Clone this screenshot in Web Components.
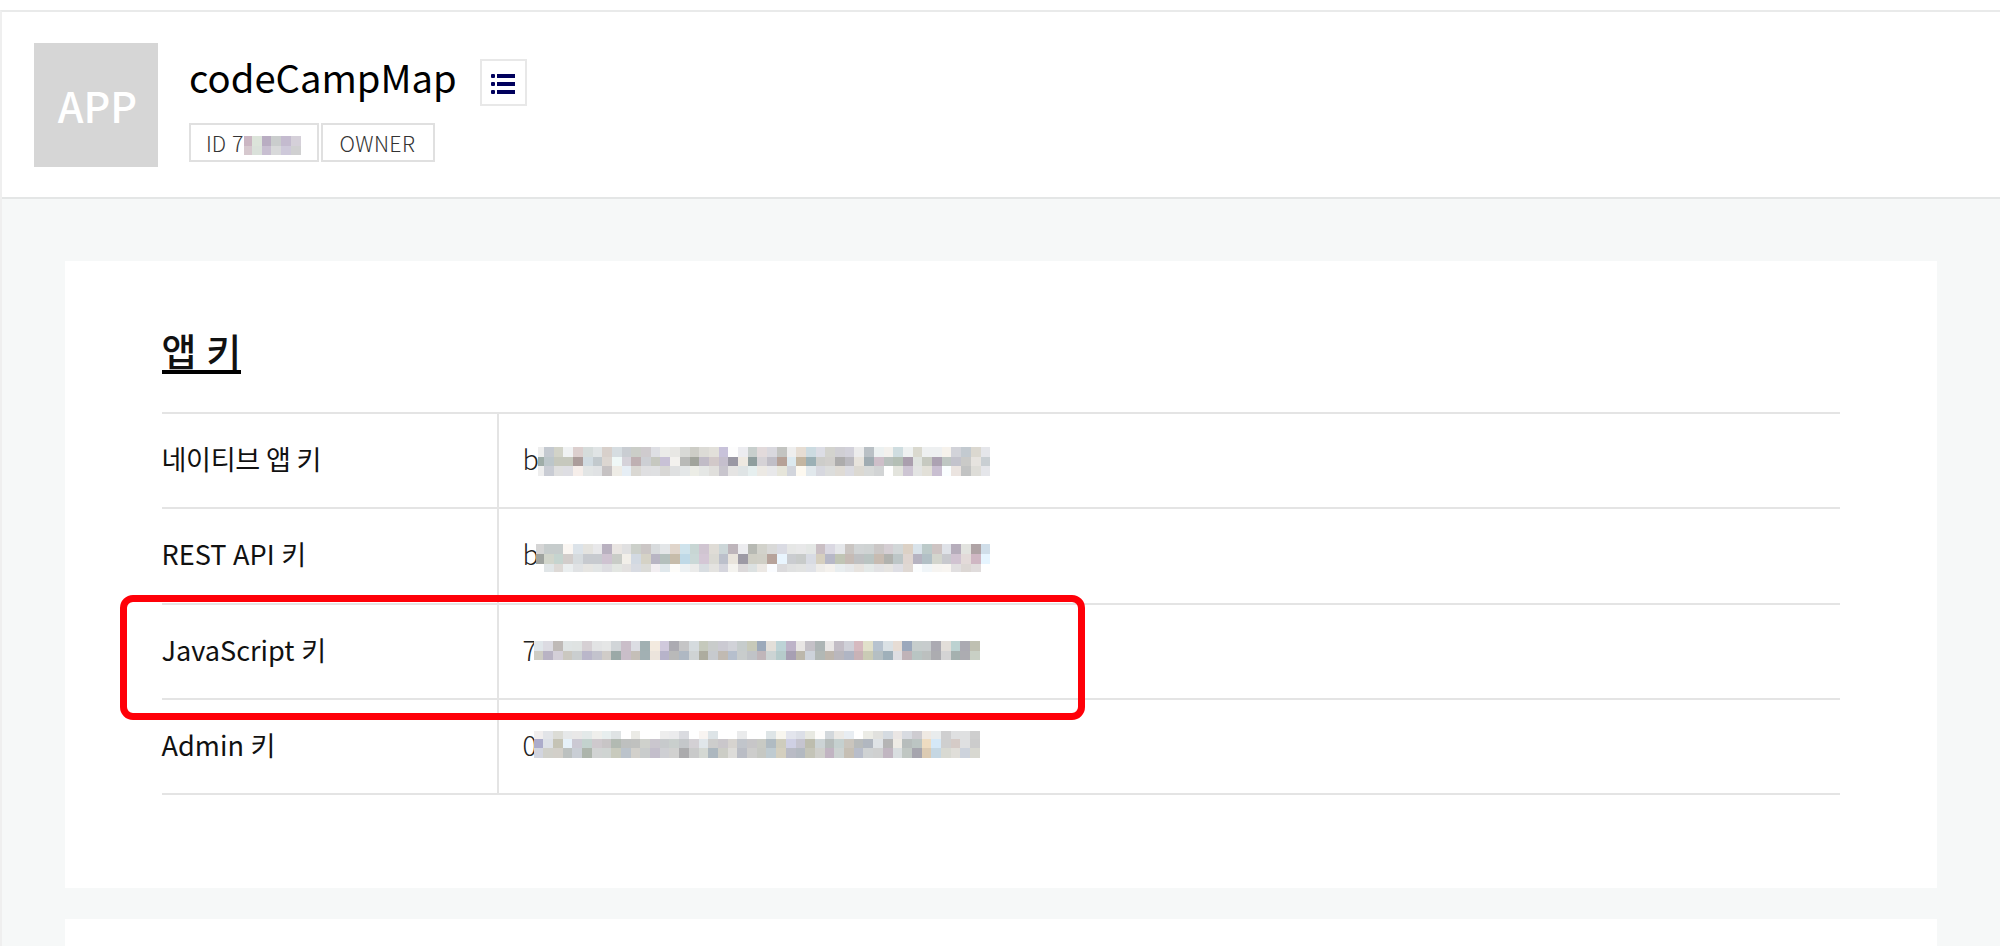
<!DOCTYPE html>
<html lang="ko">
<head>
<meta charset="utf-8">
<title>codeCampMap</title>
<style>
  body {
    margin: 0;
    height: 946px;
    overflow: hidden;
    background: #fff;
    color: #111;
    font-family: "Noto Sans CJK KR", "Noto Sans", sans-serif;
  }
</style>
</head>
<body>
<console-page>
  <app-header slot="header" name="codeCampMap">
    <app-badge>ID 7<key-mask slot="mask" data="id"></key-mask></app-badge>
    <app-badge wide>OWNER</app-badge>
  </app-header>
  <content-card heading="앱 키">
    <key-row label="네이티브 앱 키" data="native">b</key-row>
    <key-row label="REST API 키" data="rest">b</key-row>
    <key-row label="JavaScript 키" data="js" marked>7</key-row>
    <key-row label="Admin 키" data="admin">0</key-row>
  </content-card>
  <content-card></content-card>
</console-page>

<script>
// Pixelated blocks that hide the rest of a key.
// first: width of the first column, heights: height of every line of blocks
const MASKS = {
  id: {
    first: 8, heights: [9.6, 9.6],
    rows: [
      "cbb6c2 dce4da b9adc2 cacdcd c4bbcf d5d0d9",
      "d6c8ce dae1da c8bfd1 d8d9da cec9da d0d0d1"
    ]
  },
  native: {
    first: 6, heights: [9.7, 9.7, 9.6], x: 538.3, y: 447,
    rows: [
      "eeeeee c4c9d0 d2d3c8 f0f2f3 dccfce d6dcdb e0e4e5 d8d0cb d6dde1 c9cdd2 cbcec8 cfcbce dedfe4 ebebe9 e8e7e4 d8d9d6 cdcdc6 dcdbd6 e2e0da c8c2da fdfdfd ececf0 c8cfcd e2dadb d9d8de c3c4c1 eeeeee e6ddd3 ccdbe1 dcdde5 d3d3ce d0cfd4 d2d1da ececec b9c0c5 ecf1f1 f3f1ed cfdde0 eef1f1 dad9cf eef0f1 eef0f1 f6f2ec d2d3d9 c3cad0 dbd8d0 e5e6ea",
      "9fada8 bcc6ca c6c8bd c6c8bd ac9d9b d1dbe1 c2c9cd dcd6d1 eff8f7 d5d2d9 bfb0b2 cdcfd4 c6c8c0 c8c1d6 f3f1ee b9bab8 a1a49b c1bcc7 d2c9c9 c5bfcd 9a98a4 eee9e1 8f9e9e d5d2d6 c0bec7 b6a197 dce9ef c4b6a1 9bb0b5 cdcdca d1cfcc adacac bab9bf e7e3dc a0acb2 cebfc9 b9c1be b4bfb5 aa9fae dfe3df c6c9c0 aca2b2 bfc7c3 c3c3cc cacac8 e6e3df c9cfd3",
      "eeeeee c9ccd4 dfdfdf dedee3 f6eeea e2e5e5 e0e2e4 c6c2c3 eeece6 e6eef5 dad8d3 dfdfe1 dfe0e2 d8d7d5 dfe0e1 e4e7e8 ecede6 e5e7e5 e0dfdc c8c5cd e5e4e3 dfe4e5 e6efef ece9e4 e8e8ea e6e5da d2d5dc fdf9f0 e1e8ec d7d8df dcdddc dfdbd5 dbdbe1 dcd9d2 d8dad9 d2d4d5 ffffff e3e4dd cdc5d3 e3e4e3 e2e0d8 c9bfd1 fafeff ebe4e0 c2c3c3 deddd8 e5e6ea"
    ]
  },
  rest: {
    first: 8, heights: [9.8, 9.7, 8], x: 536.3, y: 544,
    rows: [
      "d5d5d5 c6cccc c6cccc faf6f2 dce3e9 e4e3df e8e8ea b9b1c0 e9e5e2 e0e0e1 ccd0ca cbc6c5 d8dbdd e3e6e8 e0d5cb cfe3ec c8d6d4 d0c5d1 dfdcd6 ccd6d8 beb5bb ececef b7b9b3 d2d2cb d9d9d8 dadbe3 e6e7e6 e8e8e9 e4e7e5 cabfc4 dad8e2 e5e7ea cac5c2 d1d4d5 cfd3d3 cbc7c6 d5ced3 d2d7d8 dcd1c5 d9e3ea bccac9 cec4c3 dfe2e8 b6adbb e2e3df afa3a5 d0dee9",
      "9fa39f d1d5cb c5d4cf d2cdcb d6dbde c7cacf c7cacf cfc3d1 c9ccc7 f2efe9 d2d9e2 d5d2c6 b8b5c3 b4c0bd c7bcaa bfd9e7 cad8d7 d4c7d5 dad9d3 bcc0cb e9e4dc 9d9aa5 cfcec4 d0cfc6 b7a39b e9f5fe caccd0 c8cbca d8dbe3 d6cfbf b7b8c7 c0c5b5 c6bbb5 bfc0c2 bac4c2 c7bbb1 b1b2ae bdc6c7 dfd5d0 b6b3c1 b2c0c6 d3d5cd c8c9ce d1c3d1 e3dad9 cfb7c3 e6f5ff",
      "ffffff e0e5e7 ddd9d6 eaeeef e0e2e4 e6e5e2 e2e5e5 dddde1 e3e6e2 e3e1e0 d8dbe2 dbdbd8 f2eef1 e0e8ec fdfcf9 edf1f3 ebebea d8dde1 e4e3e0 d5d5dd f4f3ef dcd9da dce1e1 ece8e4 fafcff dbdadc e0e1e1 e2e3e2 e0e2e7 eeece9 f4f1ed e8edef e6e8ea e7e3df e4e9e8 e2e2e4 e6e4e1 dedee4 dfd8d3 fbfdfe f0f5f8 f6f4f1 f8f5f1 e1dfe0 dcd7d4 e0dcdc ffffff"
    ]
  },
  js: {
    first: 9.3, heights: [9.7, 9.7], x: 535, y: 641.3,
    rows: [
      "e0e6ea dcdbe2 bfbab7 dfe4e4 dfe3e2 d6d0d4 e2e3e4 e5e6e6 d1d5d8 cabec9 dcdde3 a1b0b2 f3eadf d0c9dc acabb2 c5c5c6 d5dbde c5c9bc c9cccb cbcad2 d1d2d8 c6cccc c7c9b9 9ca9ba e3dfd9 bdd3d6 bdb3c8 e8e6e4 c4c1c7 adb5b5 eae7e6 c3bdc6 cfd0d8 d6b9bf e1e0ca b7c3cf dae1e5 e6dcd4 9ba8bc c6cdcc c7cccd abaab2 e2ded9 bcd2d1 abaab2 bfc0b2",
      "ceccc3 b9b3c4 d4cfd8 cbc8c0 cacecf bab7ca c3c3cd d0ccc8 9ba9a7 c9bec9 c5bfb8 a2b0b3 ece4dc b7b3ca b9b9b9 afb8c3 cfd3d4 adac9f c7cace c1bab2 b6bfcd c8cccc c0c3c7 c0b6ba ccd4d4 b6cbcb a79fb3 bcb7ab cdd2da b2b8b5 beb6ad bab7bd b0b5c4 c9b2b6 cacbb5 b5bfc3 9fb0ba dedee2 c0b3b8 b9c5c3 bcc0bf acacb0 d4d4d4 a5b1af acacb1 c9d0c5"
    ]
  },
  admin: {
    first: 9.3, heights: [7.6, 9.7, 9.7], x: 535, y: 730.7,
    rows: [
      "f1eeee e2e4e8 dcdcd6 e6e8e9 e9e8e8 e3e9e9 efefec e7eeee dfe3e4 ffffff ebebe6 ffffff ffffff ededed ebebed dadbe0 ffffff f8f4f1 dde4e7 ffffff ffffff eaebec ffffff ffffff dee5e7 f8f6ef e3e5ed dcdfe7 e8e9e2 fdfcfb d3d8dc eceae6 e8edf2 ffffff ecece6 e1e1de d5dbe1 eae6e4 d8dbe1 ceccd1 efe9e3 e9eced cfcfd0 dfe0e1 dfe0e1 cecece",
      "acaccb dde1e7 c5c3b5 e6f1f9 cbc9d3 c3d2ce cec9cd c8c5c6 b2bab2 bec0bf c0c1bf cfd1cc cac6ce c7cacc c9cfcd c4c7ca d3d0d4 e0e6ea cdcdcc cac7cb d6d3cf c1c5cb c7c6c8 c8cac4 b0bbc2 ceccbd cfd0e4 c5c4cf bdbdae ccd3d5 b6bcbb c5d0cf cac5bd b8bbbb b1b7c0 dfe3e6 b5b5b5 eeebe5 b7bdbc bcc5c3 eedcc1 d5e8f7 cfcfcf d5cbc7 dfe0e1 cccccc",
      "d2d5df d0d0ca d2cfc9 bcc1c0 c9ced5 adb5ac d1d3d3 cfd4d2 c8cabd bbc3cb d2d0cb c9cccc c3becb cecfd3 d1d1d0 ababad c9caca d4d8d3 acb7bf cccdc6 dddcd9 babdc5 cdcdcc c6c8c3 bfcbd1 d4cfbf b9bbc5 b3b9c1 c4c4b8 cfcfcb c1b4c2 ccd2d1 c6bfb4 b8bdca cfd2d3 cfd0d0 c1b6c1 d9dee0 c0c7c3 a6a5ae dccbb3 c5d7e3 d8d9d2 e0ded9 cdd3dc d8d8d1"
    ]
  }
};
const STEP = 9.7;

class KeyMask extends HTMLElement {
  constructor() {
    super();
    this.attachShadow({ mode: "open" });
  }

  connectedCallback() {
    const mask = MASKS[this.getAttribute("data")];
    const count = mask.rows[0].split(" ").length;
    const width = mask.first + (count - 1) * STEP;
    const height = mask.heights.reduce((a, b) => a + b, 0);
    let rects = "";
    let y = 0;
    mask.rows.forEach((row, r) => {
      row.split(" ").forEach((color, c) => {
        const x = c === 0 ? 0 : mask.first + (c - 1) * STEP;
        const w = c === 0 ? mask.first : STEP;
        rects += `<rect x="${x}" y="${y}" width="${w}" height="${mask.heights[r]}" fill="#${color}"/>`;
      });
      y += mask.heights[r];
    });
    this.shadowRoot.innerHTML = `
      <style>
        :host { display: block; flex: none; }
        svg { display: block; }
      </style>
      <svg width="${width}" height="${height}" shape-rendering="crispEdges">${rects}</svg>`;
  }
}
customElements.define("key-mask", KeyMask);

class AppBadge extends HTMLElement {
  constructor() {
    super();
    this.attachShadow({ mode: "open" });
    this.shadowRoot.innerHTML = `
      <style>
        :host {
          display: flex;
          box-sizing: border-box;
          height: 39px;
          padding: 0 16px 0 15px;
          border: 2px solid #e0e0e0;
          justify-content: center;
          font-size: 21.3px;
          font-weight: 300;
          line-height: 36px;
          color: #333;
        }
        :host([wide]) {
          width: 114px;
          letter-spacing: 0.4px;
        }
        ::slotted(key-mask) { margin: 11px 0 0 1px; }
      </style>
      <span><slot></slot></span><slot name="mask"></slot>`;
  }
}
customElements.define("app-badge", AppBadge);

class AppHeader extends HTMLElement {
  constructor() {
    super();
    this.attachShadow({ mode: "open" });
  }

  connectedCallback() {
    this.shadowRoot.innerHTML = `
      <style>
        :host {
          display: flex;
          box-sizing: border-box;
          height: 187px;
          padding: 31px 31px 0;
          border-bottom: 2px solid #e4e6e6;
          background: #fff;
        }
        .logo {
          box-sizing: border-box;
          width: 124px;
          height: 124px;
          margin-left: 0.5px;
          padding-left: 4px;
          flex: none;
          background: #d6d6d6;
          color: #fff;
          font-size: 41.4px;
          font-weight: 500;
          line-height: 124px;
          text-align: center;
        }
        .info { margin-left: 31.5px; }
        .title { display: flex; height: 80px; }
        h1 {
          margin: 0;
          width: 291px;
          font-size: 38.2px;
          font-weight: 400;
          line-height: 67px;
          color: #000;
        }
        .menu {
          display: flex;
          box-sizing: border-box;
          width: 47px;
          height: 47px;
          margin-top: 16px;
          padding: 2px 1px 0 0;
          border: 2px solid #e8e8e8;
          align-items: center;
          justify-content: center;
        }
        .badges { display: flex; gap: 2px; }
      </style>
      <div class="logo">APP</div>
      <div class="info">
        <div class="title">
          <h1>${this.getAttribute("name")}</h1>
          <div class="menu">
            <svg width="26" height="22" viewBox="0 0 26 22" fill="#00005c">
              <rect x="1" y="1" width="4" height="4" rx="1"/><rect x="7" y="1" width="18" height="4"/>
              <rect x="1" y="9" width="4" height="4" rx="1"/><rect x="7" y="9" width="18" height="4"/>
              <rect x="1" y="17" width="4" height="4" rx="1"/><rect x="7" y="17" width="18" height="4"/>
            </svg>
          </div>
        </div>
        <div class="badges"><slot></slot></div>
      </div>`;
  }
}
customElements.define("app-header", AppHeader);

class KeyRow extends HTMLElement {
  constructor() {
    super();
    this.attachShadow({ mode: "open" });
  }

  connectedCallback() {
    const name = this.getAttribute("data");
    const mask = MASKS[name];
    const index = [...this.parentNode.children].indexOf(this);
    const top = mask.y - (414 + index * 95.25);
    this.shadowRoot.innerHTML = `
      <style>
        :host {
          display: grid;
          position: relative;
          box-sizing: border-box;
          grid-template-columns: 335.8px 1fr;
          height: 95.25px;
          border-bottom: 2px solid #e4e4e4;
          font-size: 27.1px;
          line-height: 89px;
        }
        .label { white-space: nowrap; word-spacing: -1px; }
        /* the label without latin letters is set a little tighter */
        :host([data="native"]) .label { letter-spacing: -0.4px; }
        .value {
          display: flex;
          border-left: 2px solid #e4e4e4;
          padding-left: 23px;
          font-weight: 300;
          color: #222;
        }
        .value span { width: ${mask.x - 523}px; white-space: nowrap; }
        key-mask { margin-top: ${top}px; }
        /* red frame drawn over the row and its borders */
        .frame {
          position: absolute;
          box-sizing: border-box;
          left: -42px;
          top: -10px;
          width: 965px;
          height: 125px;
          border: 7px solid #ff0008;
          border-radius: 13px;
          z-index: 1;
        }
      </style>
      <div class="label">${this.getAttribute("label")}</div>
      <div class="value"><span><slot></slot></span><key-mask data="${name}"></key-mask></div>
      ${this.hasAttribute("marked") ? '<div class="frame"></div>' : ""}`;
  }
}
customElements.define("key-row", KeyRow);

class ContentCard extends HTMLElement {
  constructor() {
    super();
    this.attachShadow({ mode: "open" });
  }

  connectedCallback() {
    const heading = this.getAttribute("heading");
    this.shadowRoot.innerHTML = `
      <style>
        :host {
          display: block;
          box-sizing: border-box;
          height: 627px;
          padding: 64px 97px 0;
          background: #fff;
        }
        h2 {
          display: flex;
          margin: 0;
          height: 87px;
        }
        h2 span {
          height: 45px;
          border-bottom: 4px solid #000;
          font-size: 38px;
          font-weight: 500;
          line-height: 50px;
          word-spacing: -1px;
        }
        .table { border-top: 2px solid #e4e4e4; }
      </style>
      ${heading ? `<h2><span>${heading}</span></h2><div class="table"><slot></slot></div>` : ""}`;
  }
}
customElements.define("content-card", ContentCard);

class ConsolePage extends HTMLElement {
  constructor() {
    super();
    this.attachShadow({ mode: "open" });
    this.shadowRoot.innerHTML = `
      <style>
        :host {
          display: block;
          box-sizing: border-box;
          height: 946px;
          padding-top: 10px;
          overflow: hidden;
        }
        .frame {
          border-top: 2px solid #e9eaea;
          border-left: 2px solid #efefef;
          background: #f6f8f8;
        }
        .content {
          display: flex;
          flex-direction: column;
          gap: 31px;
          padding: 62px 63.5px 0 62.6px;
        }
      </style>
      <div class="frame">
        <slot name="header"></slot>
        <div class="content"><slot></slot></div>
      </div>`;
  }
}
customElements.define("console-page", ConsolePage);
</script>
</body>
</html>
